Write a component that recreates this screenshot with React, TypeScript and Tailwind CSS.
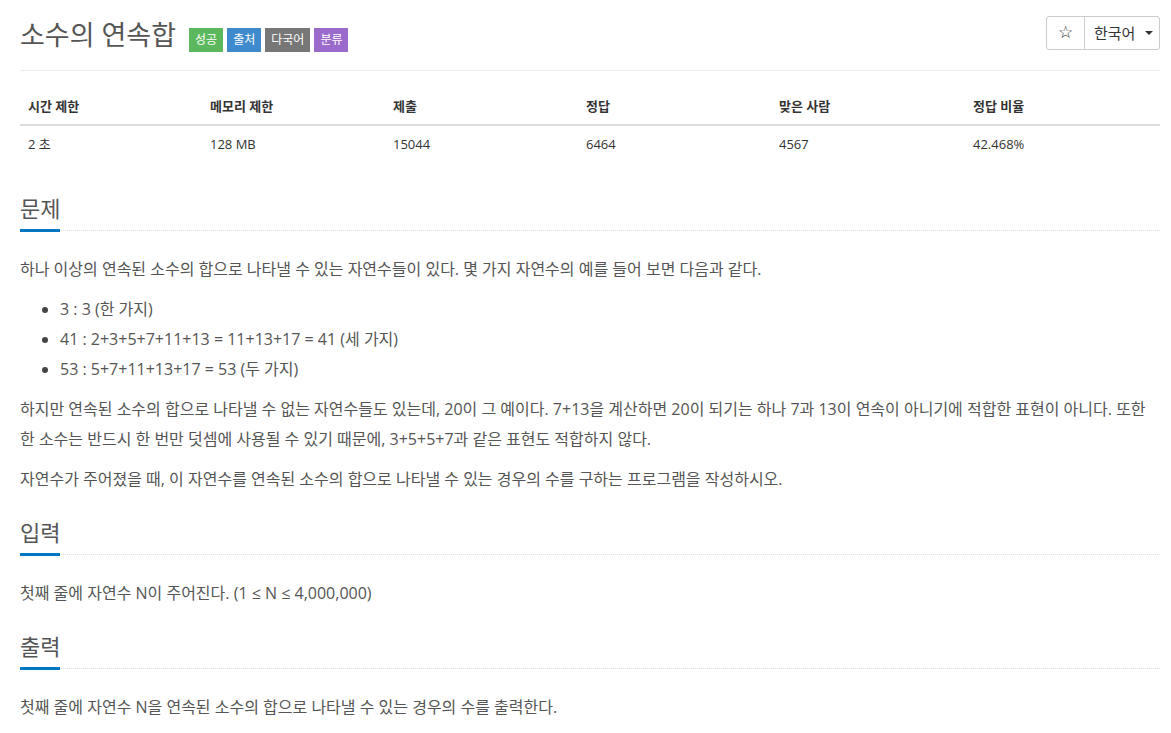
import React from 'react';

const font = "font-['Open_Sans','Noto_Sans_CJK_KR',sans-serif]";

const info = [
  { head: '시간 제한', value: '2 초', w: 'w-[182px]' },
  { head: '메모리 제한', value: '128 MB', w: 'w-[183px]' },
  { head: '제출', value: '15044', w: 'w-[193px]' },
  { head: '정답', value: '6464', w: 'w-[193px]' },
  { head: '맞은 사람', value: '4567', w: 'w-[194px]' },
  { head: '정답 비율', value: '42.468%', w: '' },
];

const labels = [
  { text: '성공', color: 'bg-[#5cb85c]' },
  { text: '출처', color: 'bg-[#3e8acc]' },
  { text: '다국어', color: 'bg-[#777777]' },
  { text: '분류', color: 'bg-[#9b6bcc]' },
];

const Headline: React.FC<{ title: string }> = ({ title }) => (
  <div className="border-b border-dotted border-[#dddddd]">
    <h2 className="inline-block text-[22px] leading-[34px] pb-[4px] border-b-[3px] border-[#0076c0] -mb-[2px] text-[#555555]">
      {title}
    </h2>
  </div>
);

const App: React.FC = () => {
  return (
    <div className={`${font} bg-white min-h-[733px] pl-[20px] pr-[11px] text-[#555555]`}>
      {/* Title bar */}
      <div className="flex justify-between items-start pt-[16px] pb-[16px] border-b border-[#eeeeee]">
        <div className="flex items-start gap-[13px]">
          <h1 className="text-[27px] leading-[38px] text-[#555555]">소수의 연속합</h1>
          <div className="flex gap-[4px] mt-[12px]">
            {labels.map(l => (
              <span key={l.text} className={`${l.color} h-[24px] px-[6px] flex items-center text-[12px] text-white`}>
                {l.text}
              </span>
            ))}
          </div>
        </div>
        <div className="flex h-[34px] border border-[#cccccc] rounded-[3px] text-[15px] text-[#333333]">
          <button className="w-[38px] flex items-center justify-center border-r border-[#cccccc] font-['DejaVu_Sans',sans-serif] text-[17px]">
            ☆
          </button>
          <button className="w-[74px] flex items-center pl-[9px] gap-[10px]">
            <span>한국어</span>
            <span className="w-0 h-0 border-l-[4px] border-r-[4px] border-t-[4px] border-l-transparent border-r-transparent border-t-[#333333]"></span>
          </button>
        </div>
      </div>

      {/* Problem info table */}
      <table className="w-full table-fixed mt-[17px] text-[13px] text-[#333333]">
        <thead>
          <tr>
            {info.map(c => (
              <th key={c.head} className={`${c.w} text-left font-bold px-[8px] py-[8px] leading-[20px] border-b-2 border-[#dddddd]`}>
                {c.head}
              </th>
            ))}
          </tr>
        </thead>
        <tbody>
          <tr>
            {info.map(c => (
              <td key={c.head} className="px-[8px] py-[8px] leading-[20px]">{c.value}</td>
            ))}
          </tr>
        </tbody>
      </table>

      {/* 문제 */}
      <section className="mt-[29px]">
        <Headline title="문제" />
        <div className="mt-[23px] text-[16px] leading-[30px]">
          <p className="mb-[10px]">하나 이상의 연속된 소수의 합으로 나타낼 수 있는 자연수들이 있다. 몇 가지 자연수의 예를 들어 보면 다음과 같다.</p>
          <ul className="list-disc pl-[40px] mb-[10px] marker:text-[#444444]">
            <li>3 : 3 (한 가지)</li>
            <li>41 : 2+3+5+7+11+13 = 11+13+17 = 41 (세 가지)</li>
            <li>53 : 5+7+11+13+17 = 53 (두 가지)</li>
          </ul>
          <p className="mb-[10px]">하지만 연속된 소수의 합으로 나타낼 수 없는 자연수들도 있는데, 20이 그 예이다. 7+13을 계산하면 20이 되기는 하나 7과 13이 연속이 아니기에 적합한 표현이 아니다. 또한 한 소수는 반드시 한 번만 덧셈에 사용될 수 있기 때문에, 3+5+5+7과 같은 표현도 적합하지 않다.</p>
          <p className="mb-[10px]">자연수가 주어졌을 때, 이 자연수를 연속된 소수의 합으로 나타낼 수 있는 경우의 수를 구하는 프로그램을 작성하시오.</p>
        </div>
      </section>

      {/* 입력 */}
      <section className="mt-[21px]">
        <Headline title="입력" />
        <div className="mt-[23px] text-[16px] leading-[30px]">
          <p className="mb-[10px]">첫째 줄에 자연수 N이 주어진다. (1 ≤ N ≤ 4,000,000)</p>
        </div>
      </section>

      {/* 출력 */}
      <section className="mt-[21px]">
        <Headline title="출력" />
        <div className="mt-[23px] text-[16px] leading-[30px]">
          <p className="mb-[10px]">첫째 줄에 자연수 N을 연속된 소수의 합으로 나타낼 수 있는 경우의 수를 출력한다.</p>
        </div>
      </section>
    </div>
  );
};

export default App;
